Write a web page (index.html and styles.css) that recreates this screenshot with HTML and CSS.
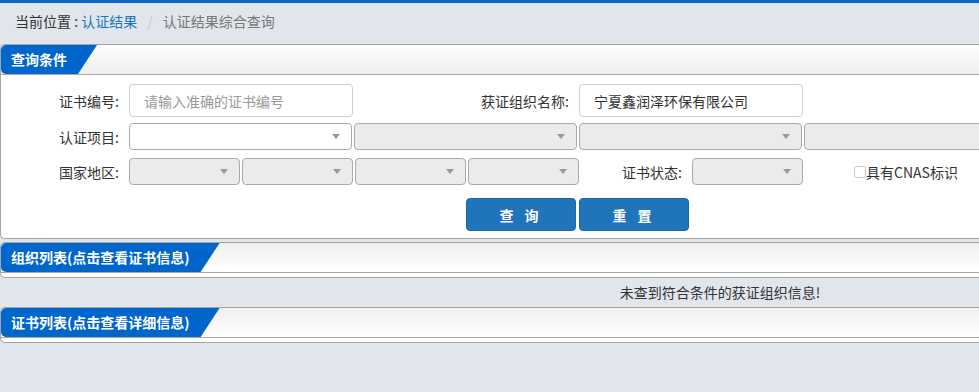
FILE: index.html
```html
<!DOCTYPE html>
<html lang="zh-CN">
<head>
  <meta charset="UTF-8" />
  <title>认证结果综合查询</title>
  <link rel="stylesheet" href="styles.css">
</head>
<body>
  <div class="topline"></div>
  <div class="page">
    <div class="crumb">
      <span class="crumb-here">当前位置 : </span><a class="crumb-link">认证结果</a><span class="crumb-sep">/</span><span class="crumb-cur">认证结果综合查询</span>
    </div>

    <!-- 查询条件 -->
    <div class="panel">
      <div class="panel-head"><span class="tab">查询条件</span></div>
      <div class="panel-body form">
        <div class="row row-input">
          <label class="lbl">证书编号:</label>
          <input class="txt" type="text" placeholder="请输入准确的证书编号">
          <label class="lbl lbl-wide">获证组织名称:</label>
          <input class="txt" type="text" value="宁夏鑫润泽环保有限公司">
        </div>
        <div class="row">
          <label class="lbl">认证项目:</label>
          <div class="sels">
            <span class="sel sel-lg sel-on"></span>
            <span class="sel sel-lg"></span>
            <span class="sel sel-lg"></span>
            <span class="sel sel-lg"></span>
          </div>
        </div>
        <div class="row row-3">
          <label class="lbl">国家地区:</label>
          <div class="sels">
            <span class="sel sel-sm"></span>
            <span class="sel sel-sm"></span>
            <span class="sel sel-sm"></span>
            <span class="sel sel-sm"></span>
          </div>
          <label class="lbl lbl-status">证书状态:</label>
          <span class="sel sel-sm"></span>
          <label class="chk"><span class="box"></span>具有CNAS标识</label>
        </div>
        <div class="btns">
          <button class="btn">查 询</button>
          <button class="btn">重 置</button>
        </div>
      </div>
    </div>

    <!-- 组织列表 -->
    <div class="panel panel-list panel-org">
      <div class="panel-head"><span class="tab">组织列表(点击查看证书信息)</span></div>
      <div class="panel-body"></div>
    </div>
    <div class="empty">未查到符合条件的获证组织信息!</div>

    <!-- 证书列表 -->
    <div class="panel panel-list">
      <div class="panel-head"><span class="tab">证书列表(点击查看详细信息)</span></div>
      <div class="panel-body"></div>
    </div>
  </div>
</body>
</html>
```

FILE: styles.css
```css
html, body {
  margin: 0;
  padding: 0;
  overflow: hidden;
}

body {
  background: #e1e5ec;
  font-family: "Noto Sans CJK SC", "Liberation Sans", sans-serif;
  font-size: 14px;
  color: #333;
}

.topline {
  height: 3px;
  background: #0a66cc;
}

.page {
  width: 1440px;
}

.crumb {
  height: 41px;
  line-height: 36px;
  padding-left: 15px;
  font-size: 14px;
}

.crumb-here {
  color: #333;
}

.crumb-link {
  color: #1b75c0;
}

.crumb-sep {
  color: #c8c8c8;
  margin: 0 10px;
}

.crumb-cur {
  color: #777;
}

.panel {
  background: #fff;
  border: 1px solid #a4a4a4;
  border-right: none;
  border-radius: 5px 0 0 5px;
}

.panel-head {
  height: 29px;
  background: linear-gradient(#fff, #eeeeee);
  border-bottom: 1px solid #a8a8a8;
  border-radius: 5px 0 0 0;
  display: flex;
}

.panel-list .panel-head {
  background: linear-gradient(#f0f0f0, #fff);
}

.tab {
  background: #0066cc;
  color: #fff;
  font-weight: bold;
  line-height: 29px;
  padding: 0 30px 0 10px;
  border-radius: 5px 0 0 5px;
  clip-path: polygon(0 0, 100% 0, calc(100% - 19px) 100%, 0 100%);
}

.panel-org {
  margin-top: 3px;
}

.panel-list .panel-body {
  height: 4px;
}

.form {
  padding: 9px 0 7px;
}

.row {
  display: flex;
  align-items: center;
  margin-bottom: 6px;
}

.row-3 {
  margin-top: 8px;
  margin-bottom: 13px;
}

.lbl {
  width: 118px;
  text-align: right;
  margin-right: 10px;
  color: #333;
}

.lbl-wide {
  width: 216px;
}

.lbl-status {
  width: 103px;
}

.txt {
  width: 224px;
  height: 33px;
  box-sizing: border-box;
  border: 1px solid #cfcfcf;
  border-radius: 4px;
  padding: 0 14px;
  font-family: inherit;
  font-size: 14px;
  color: #333;
  outline: none;
}

.txt::placeholder {
  color: #999;
}

.sels {
  display: flex;
  gap: 2px;
}

.sel {
  position: relative;
  display: block;
  height: 27px;
  box-sizing: border-box;
  border: 1px solid #aaa;
  border-radius: 4px;
  background: #ebebeb;
}

.sel::after {
  content: "";
  position: absolute;
  right: 11px;
  top: 10px;
  border-left: 4px solid transparent;
  border-right: 4px solid transparent;
  border-top: 5px solid #999;
}

.sel-on {
  background: #fff;
}

.sel-lg {
  width: 223px;
}

.sel-sm {
  width: 111px;
}

.chk {
  display: flex;
  align-items: center;
  margin-left: 51px;
  color: #333;
}

.box {
  width: 10px;
  height: 10px;
  border: 1px solid #ccc;
  border-radius: 2px;
}

.btns {
  display: flex;
  gap: 3px;
  padding-left: 465px;
}

.btn {
  width: 110px;
  height: 33px;
  background: #1f74ba;
  border: 1px solid #1a68a8;
  border-radius: 4px;
  color: #fff;
  font-family: inherit;
  font-size: 14px;
  font-weight: bold;
  letter-spacing: 4px;
}

.empty {
  height: 29px;
  line-height: 29px;
  text-align: center;
  color: #333;
}
```
